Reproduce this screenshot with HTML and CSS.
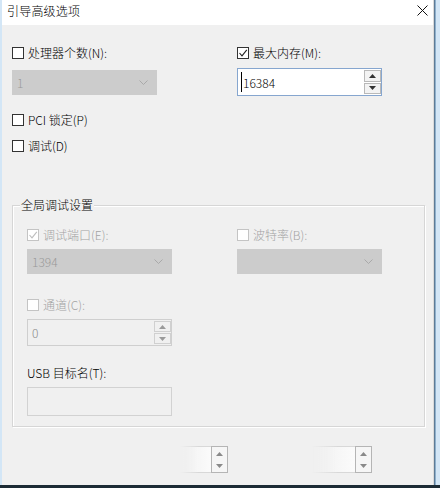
FILE: index.html
```html
<!DOCTYPE html>
<html lang="zh-CN">
<head>
<meta charset="utf-8">
<title>引导高级选项</title>
<link rel="stylesheet" href="styles.css">
</head>
<body>
<div class="screen">
  <div class="desk">
    <div class="window">
      <div class="titlebar">
        <span class="title">引导高级选项</span>
        <svg class="close" width="11" height="11" viewBox="0 0 11 11"><path d="M0.5 0.5 L10.5 10.5 M10.5 0.5 L0.5 10.5" stroke="#111" stroke-width="1"/></svg>
      </div>
      <div class="content">
        <div class="top-grid">
          <div class="col">
            <div class="check"><span class="box"></span><span>处理器个数(N):</span></div>
            <div class="select top-select"><span class="sel-text">1</span><svg class="chev" width="9" height="5" viewBox="0 0 9 5"><path d="M0.5 0.5 L4.5 4.5 L8.5 0.5" fill="none" stroke="#a9a9a9"/></svg></div>
          </div>
          <div class="col">
            <div class="check"><span class="box"><svg width="10" height="10" viewBox="0 0 10 10"><path d="M1.5 5 L4 7.8 L8.8 1.8" fill="none" stroke="#222" stroke-width="1.1"/></svg></span><span>最大内存(M):</span></div>
            <div class="spin focus">
              <span class="caret"></span><span class="spin-val">16384</span>
              <div class="spin-btns">
                <span class="sbtn"><svg width="7" height="4" viewBox="0 0 7 4"><path d="M0 4 L3.5 0 L7 4 Z" fill="#333"/></svg></span>
                <span class="sbtn"><svg width="7" height="4" viewBox="0 0 7 4"><path d="M0 0 L3.5 4 L7 0 Z" fill="#333"/></svg></span>
              </div>
            </div>
          </div>
        </div>
        <div class="check pci"><span class="box"></span><span>PCI 锁定(P)</span></div>
        <div class="check dbg"><span class="box"></span><span>调试(D)</span></div>

        <div class="group">
          <span class="group-title">全局调试设置</span>
          <div class="group-grid">
            <div class="check dis"><span class="box"><svg width="10" height="10" viewBox="0 0 10 10"><path d="M1.5 5 L4 7.8 L8.8 1.8" fill="none" stroke="#bdbdbd" stroke-width="1.1"/></svg></span><span>调试端口(E):</span></div>
            <div class="check dis"><span class="box"></span><span>波特率(B):</span></div>
            <div class="select g-select"><span class="sel-text">1394</span><svg class="chev" width="9" height="5" viewBox="0 0 9 5"><path d="M0.5 0.5 L4.5 4.5 L8.5 0.5" fill="none" stroke="#a9a9a9"/></svg></div>
            <div class="select g-select"><span class="sel-text"></span><svg class="chev" width="9" height="5" viewBox="0 0 9 5"><path d="M0.5 0.5 L4.5 4.5 L8.5 0.5" fill="none" stroke="#a9a9a9"/></svg></div>
          </div>
          <div class="check dis chan"><span class="box"></span><span>通道(C):</span></div>
          <div class="spin disabled chan-spin">
            <span class="spin-val">0</span>
            <div class="spin-btns">
              <span class="sbtn"><svg width="7" height="4" viewBox="0 0 7 4"><path d="M0 4 L3.5 0 L7 4 Z" fill="#9a9a9a"/></svg></span>
              <span class="sbtn"><svg width="7" height="4" viewBox="0 0 7 4"><path d="M0 0 L3.5 4 L7 0 Z" fill="#9a9a9a"/></svg></span>
            </div>
          </div>
          <div class="label usb">USB 目标名(T):</div>
          <div class="textbox disabled"></div>
        </div>

        <div class="bottom-row">
          <div class="cut-spin s1">
            <span class="cut-field"></span>
            <div class="spin-btns">
              <span class="sbtn"><svg width="7" height="4" viewBox="0 0 7 4"><path d="M0 4 L3.5 0 L7 4 Z" fill="#8a8a8a"/></svg></span>
              <span class="sbtn"><svg width="7" height="4" viewBox="0 0 7 4"><path d="M0 0 L3.5 4 L7 0 Z" fill="#8a8a8a"/></svg></span>
            </div>
          </div>
          <div class="cut-spin s2">
            <span class="cut-field"></span>
            <div class="spin-btns">
              <span class="sbtn"><svg width="7" height="4" viewBox="0 0 7 4"><path d="M0 4 L3.5 0 L7 4 Z" fill="#8a8a8a"/></svg></span>
              <span class="sbtn"><svg width="7" height="4" viewBox="0 0 7 4"><path d="M0 0 L3.5 4 L7 0 Z" fill="#8a8a8a"/></svg></span>
            </div>
          </div>
        </div>
      </div>
    </div>
  </div>
  <div class="taskbar"></div>
</div>
</body>
</html>
```

FILE: styles.css
```css
* { box-sizing: border-box; }
html, body { margin: 0; padding: 0; }
body {
  font-family: "Noto Sans CJK SC", "Noto Sans", sans-serif;
  font-size: 12px;
  font-weight: 300;
  color: #000;
  background: #d5e8f7;
}
.screen {
  width: 440px;
  height: 488px;
  display: flex;
  flex-direction: column;
  overflow: hidden;
}
.desk {
  flex: 1;
  display: flex;
  background: #d3e6f6;
  min-height: 0;
}
.window {
  margin-left: 2px;
  width: 432px;
  background: #f0f0f0;
  border-right: 1px solid #dadada;
  box-shadow: 1px 0 0 #5d7b97, 2px 0 0 #8fb0cc;
  display: flex;
  flex-direction: column;
}
.taskbar {
  height: 3px;
  background: #1d2b35;
}
.titlebar {
  height: 25px;
  background: #fff;
  display: flex;
  justify-content: space-between;
  align-items: flex-start;
  padding: 0 5px 0 5px;
}
.title {
  line-height: 22px;
  font-size: 12px;
  letter-spacing: 0.2px;
}
.close { margin-top: 5px; margin-right: 0; }

.content {
  padding: 21px 0 0 10px;
  display: flex;
  flex-direction: column;
}
.top-grid {
  display: grid;
  grid-template-columns: 225px 145px;
}
.col { display: flex; flex-direction: column; }
.check {
  display: flex;
  align-items: center;
  gap: 4px;
  height: 14px;
  line-height: 14px;
  white-space: nowrap;
}
.box {
  width: 12px;
  height: 12px;
  border: 1px solid #333;
  background: #fff;
  display: flex;
  align-items: center;
  justify-content: center;
  flex: none;
}
.check.dis { color: #a3a3a3; }
.check.dis .box { border-color: #c4c4c4; }

.select {
  width: 145px;
  height: 25px;
  background: #cccccc;
  display: flex;
  align-items: center;
  justify-content: space-between;
  padding: 0 9px 0 5px;
}
.sel-text { color: #999; }
.top-select { margin-top: 10px; }

.spin {
  width: 145px;
  display: flex;
  align-items: stretch;
  position: relative;
}
.spin.focus {
  margin-top: 8px;
  height: 28px;
  background: #fff;
  border: 1px solid #86a6cf;
  padding-left: 3px;
}
.caret {
  width: 1px;
  background: #000;
  margin: 3px 1px 3px 0;
}
.spin-val {
  flex: 1;
  display: flex;
  align-items: center;
}
.spin-btns {
  width: 17px;
  display: flex;
  flex-direction: column;
  gap: 1px;
  padding: 1px 0;
}
.sbtn {
  flex: 1;
  border: 1px solid #b9b9b9;
  background: #f3f3f3;
  display: flex;
  align-items: center;
  justify-content: center;
}
.pci { margin-top: 17px; }
.dbg { margin-top: 12px; }

.group {
  margin-top: 52px;
  width: 413px;
  height: 222px;
  border: 1px solid #d6d6d6;
  box-shadow: inset 1px 1px 0 #fff, 1px 1px 0 #fff;
  padding: 0 14px;
  display: flex;
  flex-direction: column;
}
.group-title {
  align-self: flex-start;
  margin: -8px 0 0 -7px;
  height: 14px;
  line-height: 14px;
  background: #f0f0f0;
  padding: 0 1px;
}
.group-grid {
  margin-top: 16px;
  display: grid;
  grid-template-columns: 210px 145px;
  row-gap: 7px;
}
.chan { margin-top: 24px; }
.spin.disabled {
  margin-top: 7px;
  height: 27px;
  border: 1px solid #cfcfcf;
  padding-left: 4px;
  color: #8a8a8a;
}
.spin.disabled .sbtn { border-color: #d0d0d0; background: #f0f0f0; }
.label { height: 14px; line-height: 14px; }
.usb { margin-top: 20px; }
.textbox {
  margin-top: 7px;
  width: 145px;
  height: 29px;
  border: 1px solid #d2d2d2;
}

.bottom-row {
  margin-top: 19px;
  display: flex;
  height: 27px;
}
.cut-spin {
  display: flex;
  height: 27px;
}
.cut-field {
  border-top: 1px solid #d8d8d8;
  border-bottom: 1px solid #d8d8d8;
  background: linear-gradient(to right, #f0f0f0, #fbfbfb);
  -webkit-mask-image: linear-gradient(to right, transparent, #000 60%);
  mask-image: linear-gradient(to right, transparent, #000 60%);
}
.cut-spin .spin-btns {
  border: 1px solid #b5b5b5;
  background: #f6f6f6;
  padding: 1px;
  width: 17px;
}
.cut-spin .sbtn { border: none; background: transparent; }
.s1 { margin-left: 168px; }
.s1 .cut-field { width: 31px; }
.s2 { margin-left: 84px; }
.s2 .cut-field { width: 43px; }
```
